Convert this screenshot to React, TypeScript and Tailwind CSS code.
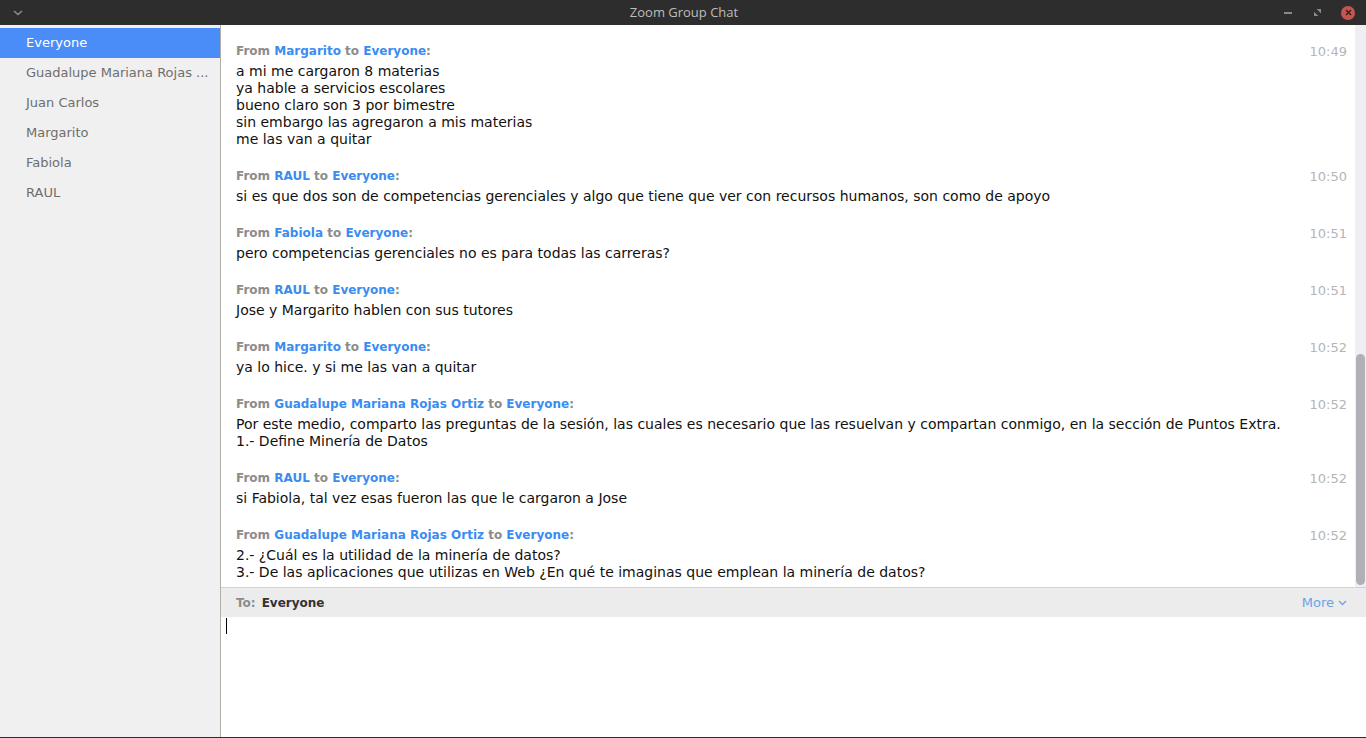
import React from "react"

const people = ["Everyone", "Guadalupe Mariana Rojas ...", "Juan Carlos", "Margarito", "Fabiola", "RAUL"]

type Msg = { from: string; time: string; lines: string[] }

const messages: Msg[] = [
  {
    from: "Margarito",
    time: "10:49",
    lines: [
      "a mi me cargaron 8 materias",
      "ya hable a servicios escolares",
      "bueno claro son 3 por bimestre",
      "sin embargo las agregaron a mis materias",
      "me las van a quitar",
    ],
  },
  {
    from: "RAUL",
    time: "10:50",
    lines: ["si es que dos son de competencias gerenciales y algo que tiene que ver con recursos humanos, son como de apoyo"],
  },
  { from: "Fabiola", time: "10:51", lines: ["pero competencias gerenciales no es para todas las carreras?"] },
  { from: "RAUL", time: "10:51", lines: ["Jose y Margarito hablen con sus tutores"] },
  { from: "Margarito", time: "10:52", lines: ["ya lo hice. y si me las van a quitar"] },
  {
    from: "Guadalupe Mariana Rojas Ortiz",
    time: "10:52",
    lines: [
      "Por este medio, comparto las preguntas de la sesión, las cuales es necesario que las resuelvan y compartan conmigo, en la sección de Puntos Extra.",
      "1.- Define Minería de Datos",
    ],
  },
  { from: "RAUL", time: "10:52", lines: ["si Fabiola, tal vez esas fueron las que le cargaron a Jose"] },
  {
    from: "Guadalupe Mariana Rojas Ortiz",
    time: "10:52",
    lines: [
      "2.- ¿Cuál es la utilidad de la minería de datos?",
      "3.- De las aplicaciones que utilizas en Web ¿En qué te imaginas que emplean la minería de datos?",
    ],
  },
]

function TitleBar() {
  return (
    <div className="grid h-[25px] shrink-0 grid-cols-[100px_1fr_100px] items-center bg-[#2d2d2d] pl-[13px] pr-[11px] font-['Open_Sans',sans-serif] text-[13px] text-[#bdbdbd]">
      <svg width="10" height="6" viewBox="0 0 10 6">
        <path d="M1 1 L5 4.5 L9 1" stroke="#8c8c8c" strokeWidth="1.6" fill="none" />
      </svg>
      <div className="text-center">Zoom Group Chat</div>
      <div className="flex items-center justify-end gap-[20px]">
        <div className="h-[2px] w-[8px] bg-[#8a8a8a]" />
        <svg width="7" height="7" viewBox="0 0 8 8" className="ml-[2px]">
          <path d="M3 0 H8 V5 Z" fill="#8a8a8a" />
          <path d="M0 3 V8 H5 Z" fill="#8a8a8a" />
        </svg>
        <div className="flex h-[14px] w-[14px] items-center justify-center rounded-full bg-[#c7554d]">
          <svg width="7" height="7" viewBox="0 0 7 7">
            <path d="M1 1 L6 6 M6 1 L1 6" stroke="#3a2222" strokeWidth="1.6" />
          </svg>
        </div>
      </div>
    </div>
  )
}

function Sidebar() {
  return (
    <div className="w-[221px] shrink-0 border-r border-[#b3afa9] bg-[#f0f0f0] pt-[3px] text-[13px]">
      {people.map((p, i) => (
        <div
          key={p}
          className={
            i === 0
              ? "flex h-[30px] items-center bg-[#4b8df8] pl-[26px] pr-[10px] text-white"
              : "flex h-[30px] items-center pl-[26px] pr-[10px] text-[#6e6e6e]"
          }
        >
          <span className="whitespace-nowrap">{p}</span>
        </div>
      ))}
    </div>
  )
}

function Message({ m }: { m: Msg }) {
  return (
    <div className="mb-[19px]">
      <div className="flex items-center justify-between pt-[1px] leading-[17px]">
        <div className="text-[12px] font-bold text-[#8c8c8c]">
          From <span className="text-[#3b8cf0]">{m.from}</span> to <span className="text-[#3b8cf0]">Everyone</span>:
        </div>
        <div className="text-[13px] text-[#b5b5b5]">{m.time}</div>
      </div>
      <div className="mt-[3px] text-[14px] leading-[17px] text-[#111]">
        {m.lines.map((l, i) => (
          <div key={i}>{l}</div>
        ))}
      </div>
    </div>
  )
}

export default function App() {
  return (
    <div className="flex h-[738px] w-[1366px] flex-col overflow-hidden border-b border-[#2d2d2d] bg-white font-['DejaVu_Sans',sans-serif]">
      <TitleBar />
      <div className="flex min-h-0 flex-1">
        <Sidebar />
        <div className="flex min-w-0 flex-1 flex-col">
          {/* message list with scrollbar */}
          <div className="flex h-[562px] shrink-0">
            <div className="flex-1 overflow-hidden pl-[15px] pr-[8px] pt-[17px]">
              {messages.map((m, i) => (
                <Message key={i} m={m} />
              ))}
            </div>
            <div className="flex w-[11px] flex-col bg-[#efeff3] pt-[329px] pb-[2px]">
              <div className="mx-[1px] flex-1 rounded-full bg-[#b0b0b7]" />
            </div>
          </div>
          {/* recipient bar */}
          <div className="flex h-[30px] shrink-0 items-center border-t border-[#d2d2d2] bg-[#ececec] pl-[15px] pr-[19px]">
            <span className="text-[12px] font-bold text-[#8c8c8c]">To:</span>
            <span className="ml-[6px] text-[12px] font-bold text-[#333]">Everyone</span>
            <div className="ml-auto flex items-center gap-[4px] text-[13px] text-[#6aa3e6]">
              More
              <svg width="9" height="6" viewBox="0 0 9 6">
                <path d="M1 1 L4.5 4.5 L8 1" stroke="#6aa3e6" strokeWidth="1.3" fill="none" />
              </svg>
            </div>
          </div>
          {/* input */}
          <div className="flex-1 pl-[5px] pt-[1px]">
            <div className="h-[16px] w-[1px] bg-black" />
          </div>
        </div>
      </div>
    </div>
  )
}
